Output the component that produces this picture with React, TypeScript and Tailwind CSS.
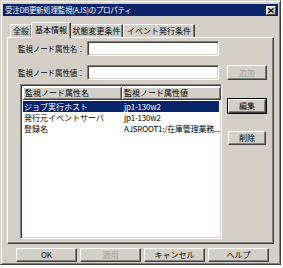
import React from "react";

const font = { fontFamily: '"Noto Sans CJK JP", "Noto Sans", sans-serif' };

function Btn({ children, w, h, disabled, focused }: { children: React.ReactNode; w: string; h: string; disabled?: boolean; focused?: boolean }) {
  return (
    <div
      className={`${w} ${h} flex items-center justify-center bg-[#d4d0c8] border border-t-white border-l-white border-r-[#404040] border-b-[#404040] shadow-[inset_-1px_-1px_#808080,inset_1px_1px_#d4d0c8] text-[8px] leading-none whitespace-nowrap ${disabled ? "text-[#a0a0a0]" : "text-black"} ${focused ? "outline outline-1 outline-black" : ""}`}
    >
      {children}
    </div>
  );
}

function Field({ w }: { w: string }) {
  return (
    <div className={`${w} h-[15px] bg-white border border-t-[#808080] border-l-[#808080] border-r-white border-b-white shadow-[inset_1px_1px_#404040,inset_-1px_-1px_#d4d0c8]`} />
  );
}

function HeaderCell({ children, w }: { children: React.ReactNode; w: string }) {
  return (
    <div className={`${w} h-[13px] shrink-0 flex items-center pl-[2px] bg-[#d4d0c8] border-r border-b border-r-[#404040] border-b-[#404040] shadow-[inset_1px_1px_white,inset_-1px_-1px_#808080] text-[8px] leading-none text-black whitespace-nowrap`}>
      {children}
    </div>
  );
}

export default function App() {
  const rows = [
    ["ジョブ実行ホスト", "jp1-130w2", true],
    ["発行元イベントサーバ", "jp1-130w2", false],
    ["登録名", "AJSROOT1:/在庫管理業務...", false],
  ] as const;
  return (
    <div className="w-[283px] h-[268px] bg-white" style={font}>
      <div className="w-[281px] h-[265px] bg-[#d4d0c8] border border-t-[#d4d0c8] border-l-[#d4d0c8] border-r-[#404040] border-b-[#404040] shadow-[inset_1px_1px_white,inset_-1px_-1px_#808080] p-[2px] flex flex-col">
        {/* title bar */}
        <div className="h-[12px] bg-[#0a246a] flex items-center justify-between pl-[2px] pr-[2px] mt-[1px]">
          <span className="text-white text-[7.5px] leading-none tracking-[-0.3px] whitespace-nowrap">受注DB更新処理監視(AJS)のプロパティ</span>
          <div className="w-[10px] h-[9px] bg-[#d4d0c8] border border-t-white border-l-white border-r-[#404040] border-b-[#404040] flex items-center justify-center">
            <svg width="6" height="5" viewBox="0 0 6 5">
              <path d="M0 0 L6 5 M6 0 L0 5" stroke="black" strokeWidth="1.3" />
            </svg>
          </div>
        </div>
        {/* tabs */}
        <div className="mt-[6px] h-[15px] flex items-end pl-[7px] relative z-10">
          <div className="h-[13px] w-[22px] flex items-center justify-center border-t border-l border-t-white border-l-white border-r border-r-[#404040] shadow-[inset_-1px_0_#808080] text-[8px] leading-none whitespace-nowrap">全般</div>
          <div className="h-[16px] w-[40px] -mb-[1px] -ml-[1px] bg-[#d4d0c8] flex items-center justify-center border-t border-l border-t-white border-l-white border-r border-r-[#404040] shadow-[inset_-1px_0_#808080] text-[8px] leading-none pb-[2px] whitespace-nowrap">基本情報</div>
          <div className="h-[13px] w-[52px] flex items-center justify-center border-t border-r border-t-white border-r-[#404040] shadow-[inset_-1px_0_#808080] text-[8px] leading-none whitespace-nowrap">状態変更条件</div>
          <div className="h-[13px] w-[72px] flex items-center justify-center border-t border-l border-t-white border-l-white border-r border-r-[#404040] shadow-[inset_-1px_0_#808080] text-[8px] leading-none whitespace-nowrap">イベント発行条件</div>
        </div>
        {/* panel */}
        <div className="ml-[4px] w-[267px] h-[207px] border border-t-white border-l-white border-r-[#404040] border-b-[#404040] shadow-[inset_-1px_-1px_#808080] flex flex-col pl-[12px]">
          <div className="mt-[3px] flex items-center">
            <div className="w-[69px] -ml-[2px] text-[7.5px] leading-none whitespace-nowrap tracking-[-0.1px]">監視ノード属性名：</div>
            <Field w="w-[132px]" />
          </div>
          <div className="mt-[9px] flex items-center">
            <div className="w-[69px] -ml-[2px] text-[7.5px] leading-none whitespace-nowrap tracking-[-0.1px]">監視ノード属性値：</div>
            <Field w="w-[132px]" />
            <div className="ml-[8px]">
              <Btn w="w-[40px]" h="h-[15px]" disabled>追加</Btn>
            </div>
          </div>
          <div className="mt-[4px] flex">
            <div className="w-[202px] h-[155px] bg-white border border-t-[#808080] border-l-[#808080] border-r-white border-b-white shadow-[inset_1px_1px_#404040,inset_-1px_-1px_#d4d0c8] p-[2px] pr-[2px] flex flex-col">
              <div className="flex">
                <HeaderCell w="w-[99px]">監視ノード属性名</HeaderCell>
                <HeaderCell w="w-[99px]">監視ノード属性値</HeaderCell>
              </div>
              <div className="mt-[1px] flex flex-col">
                {rows.map(([a, b, sel], i) => (
                  <div key={i} className={`h-[11px] flex items-center text-[8px] leading-[11px] ${sel ? "bg-[#0a246a] text-white" : "text-black"}`}>
                    <span className="w-[99px] shrink-0 pl-[1px] whitespace-nowrap">{a}</span>
                    <span className="w-[97px] shrink-0 pl-[2px] whitespace-nowrap tracking-[-0.2px]">{b}</span>
                  </div>
                ))}
              </div>
            </div>
            <div className="ml-[6px] pt-[15px] flex flex-col">
              <Btn w="w-[38px]" h="h-[14px]" focused>編集</Btn>
              <div className="mt-[18px]">
                <Btn w="w-[38px]" h="h-[14px]">削除</Btn>
              </div>
            </div>
          </div>
        </div>
        {/* bottom buttons */}
        <div className="mt-[4px] pl-[13px] flex gap-[3px]">
          <Btn w="w-[61px]" h="h-[14px]">OK</Btn>
          <Btn w="w-[61px]" h="h-[14px]" disabled>適用</Btn>
          <Btn w="w-[61px]" h="h-[14px]">キャンセル</Btn>
          <Btn w="w-[61px]" h="h-[14px]">ヘルプ</Btn>
        </div>
      </div>
    </div>
  );
}
